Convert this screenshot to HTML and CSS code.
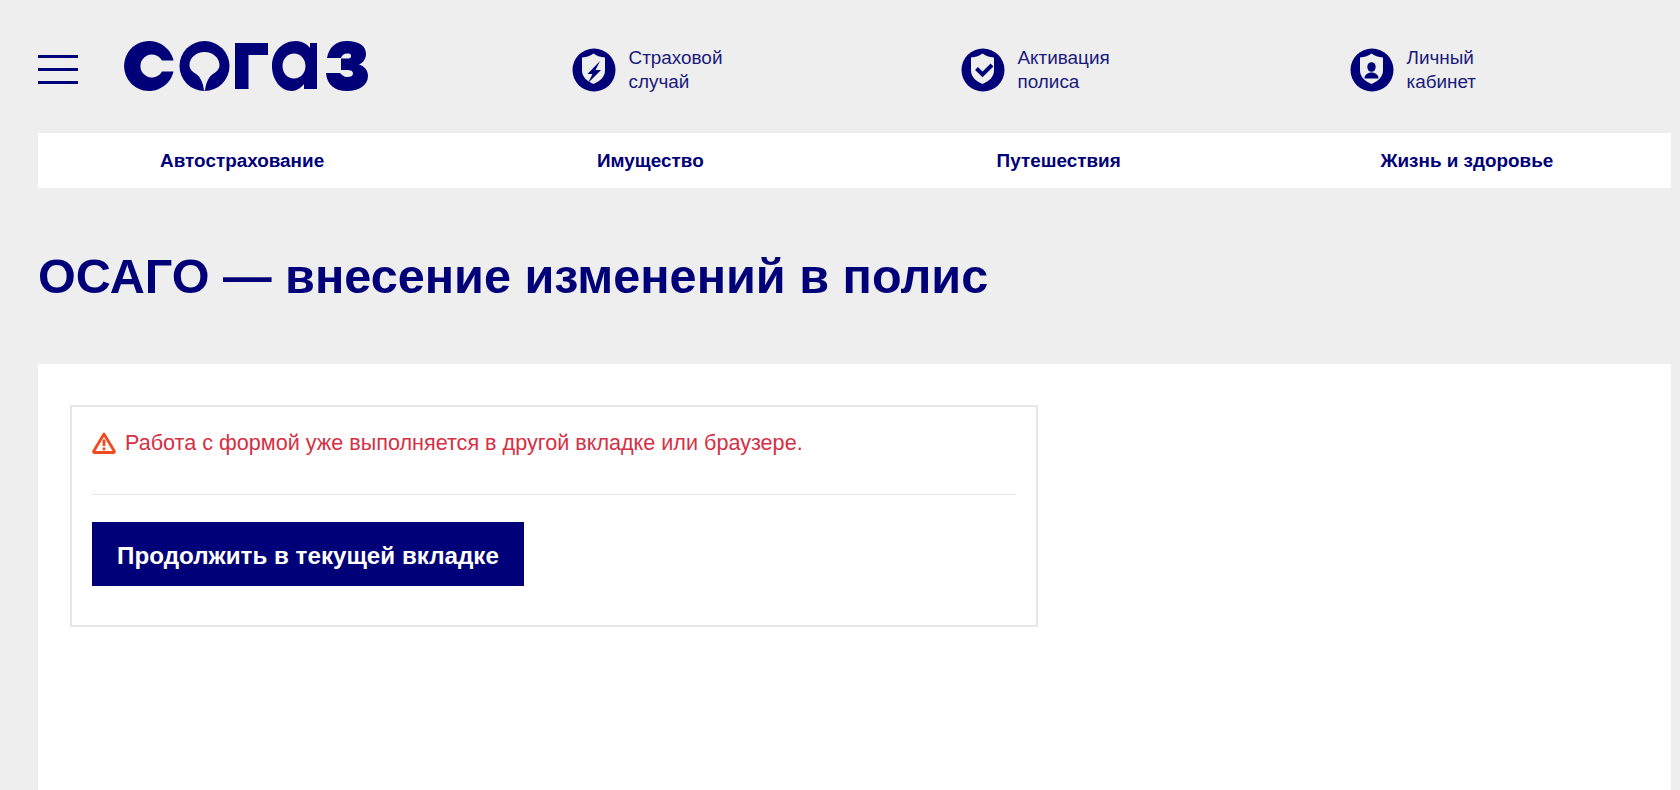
FILE: index.html
```html
<!DOCTYPE html>
<html lang="ru">
<head>
<meta charset="utf-8">
<title>ОСАГО — внесение изменений в полис</title>
<link rel="stylesheet" href="styles.css">
</head>
<body>
<div class="page">
  <header class="header">
    <button class="burger" aria-label="Меню"><span></span><span></span><span></span></button>
    <div class="logo-wrap">
      <svg class="logo" viewBox="0 0 244 52" aria-label="СОГАЗ">
        <path class="logo-fill" d="M49.500 20.500A25 25 0 1 0 49.500 31.500L38 31.500A11.500 11.500 0 1 1 38 20.500Z"/>
        <circle class="logo-fill" cx="80.500" cy="26" r="25"/>
        <path class="logo-bg" d="M80.500 12C89 12 95.500 18 95.500 25C95.500 29 93 31 90.500 33C85 36 82 42 81 50.500L80 50.500C79 42 76 36 70.500 33C68 31 65.500 29 65.500 25C65.500 18 72 12 80.500 12Z"/>
        <path class="logo-fill" d="M111 3H144V15H124.500V49H111Z"/>
        <path class="logo-fill" fill-rule="evenodd" d="M172 1C179 1 184 5 186 8L186 3H193V49H180V44C177 48 172 51 168 51C156 51 148 39 148 26C148 12 158 1 172 1ZM170 13.500C163.500 13.500 158.500 19 158.500 26C158.500 33 163.500 38.500 170 38.500C176.500 38.500 181.500 33 181.500 26C181.500 19 176.500 13.500 170 13.500Z"/>
        <path class="logo-fill" d="M203 18C205 7 212 1 223 1C235 1 242 6 242 14C242 19 239 23 235 24.500C240 26 244 30 244 36C244 45 235 51 223 51C211 51 203 45 202 33H216C218 35 220 37 223 37C227 37 229 36 229 33.500C229 31 227 30 223 30H217V18.500H223C226 18.500 227 18 227 16C227 14 226 13.500 223 13.500C220 13.500 218 15 217 18Z"/>
      </svg>
    </div>
    <a class="action">
      <svg class="action-icon" viewBox="0 0 44 44"><circle class="disc" cx="22" cy="22" r="21.500"/><path class="shield" d="M21.500 5.500c3 2.400 6.500 3.600 11.500 4v13c0 6-4.500 10.500-11.500 13.500-7-3-11.500-7.500-11.500-13.500v-13c5-.4 8.500-1.600 11.500-4z"/><path class="disc" d="M28 13 15.500 26H20.500L16 35 29 22H23.500z"/></svg>
      <span class="action-text">Страховой<br>случай</span>
    </a>
    <a class="action">
      <svg class="action-icon" viewBox="0 0 44 44"><circle class="disc" cx="22" cy="22" r="21.500"/><path class="shield" d="M21.500 5.500c3 2.400 6.500 3.600 11.500 4v13c0 6-4.500 10.500-11.500 13.500-7-3-11.500-7.500-11.500-13.500v-13c5-.4 8.500-1.600 11.500-4z"/><path class="check" d="M15.500 20.500l6 6 9.500-9.500"/></svg>
      <span class="action-text">Активация<br>полиса</span>
    </a>
    <a class="action">
      <svg class="action-icon" viewBox="0 0 44 44"><circle class="disc" cx="22" cy="22" r="21.500"/><path class="shield" d="M21.500 5.500c3 2.400 6.500 3.600 11.500 4v13c0 6-4.500 10.500-11.500 13.500-7-3-11.500-7.500-11.500-13.500v-13c5-.4 8.500-1.600 11.500-4z"/><ellipse class="disc" cx="21.500" cy="19" rx="4.200" ry="4.800"/><path class="disc" d="M14.500 30.500c0-3.500 3-6 7-6s7 2.500 7 6z"/></svg>
      <span class="action-text">Личный<br>кабинет</span>
    </a>
  </header>
  <nav class="nav">
    <a>Автострахование</a>
    <a>Имущество</a>
    <a>Путешествия</a>
    <a>Жизнь и здоровье</a>
  </nav>
  <h1 class="title">ОСАГО — внесение изменений в полис</h1>
  <main class="card">
    <section class="notice">
      <p class="error">
        <svg class="warn" viewBox="0 0 24 22"><path class="warn-line" d="M12 2 1.800 19c-.4.800 0 1.500.8 1.500h18.800c.8 0 1.200-.7.800-1.500z"/><path class="warn-mark" d="M12 7.500v6.500M12 15.500v2.800"/></svg>
        Работа с формой уже выполняется в другой вкладке или браузере.
      </p>
      <hr class="rule">
      <button class="continue">Продолжить в текущей вкладке</button>
    </section>
  </main>
</div>
</body>
</html>
```
FILE: styles.css
```css
* { box-sizing: border-box; }
html, body { margin: 0; height: 790px; overflow: hidden; }
body { background: #eeeeee; font-family: "Liberation Sans", Arial, sans-serif; color: #000078; }
.page { padding: 0 9px 0 38px; height: 790px; display: flex; flex-direction: column; }

.header { display: flex; align-items: center; height: 133px; padding-top: 6px; flex: none; }
.burger { width: 40px; height: 29px; margin: 0 47px 0 0; padding: 0; border: 0; background: none; display: flex; flex-direction: column; justify-content: space-between; flex: none; }
.burger span { display: block; height: 3px; background: #000078; }
.logo-wrap { width: 447px; flex: none; align-self: flex-start; margin-top: 34px; }
.logo { width: 244px; height: 52px; display: block; margin-left: -1px; }
.logo-fill { fill: #000078; }
.logo-bg { fill: #eeeeee; }

.action { width: 389px; flex: none; display: flex; align-items: center; gap: 12.500px; }
.action-icon { width: 44px; height: 44px; flex: none; }
.disc { fill: #000078; }
.shield { fill: #eeeeee; }
.check { fill: none; stroke: #000078; stroke-width: 4; }
.action-text { font-size: 18.900px; line-height: 24px; color: #1a1a7c; }

.nav { display: grid; grid-template-columns: repeat(4, 1fr); height: 55px; background: #fff; flex: none; align-items: center; text-align: center; font-size: 18.900px; font-weight: 700; }

.title { margin: 0; height: 176px; flex: none; padding-top: 56px; font-size: 48.600px; line-height: 64px; font-weight: 700; color: #000078; }

.card { flex: 1; background: #fff; padding: 41px 32px; }
.notice { width: 968px; height: 222px; border: 2px solid #e6e6e6; padding: 20px; }
.error { margin: 0; height: 32px; display: flex; align-items: center; gap: 9px; font-size: 21.600px; color: #d63044; }
.warn { width: 24px; height: 22px; flex: none; }
.warn-line { fill: none; stroke: #f04a1e; stroke-width: 2.800; stroke-linejoin: round; }
.warn-mark { fill: none; stroke: #f04a1e; stroke-width: 2.800; }
.rule { margin: 35px 0 27px; border: 0; border-top: 1px solid #e6e6e6; }
.continue { display: block; width: 432px; height: 64px; border: 0; padding: 4px 0 0; background: #000078; color: #fff; font: 700 24.200px "Liberation Sans", Arial, sans-serif; }
```
